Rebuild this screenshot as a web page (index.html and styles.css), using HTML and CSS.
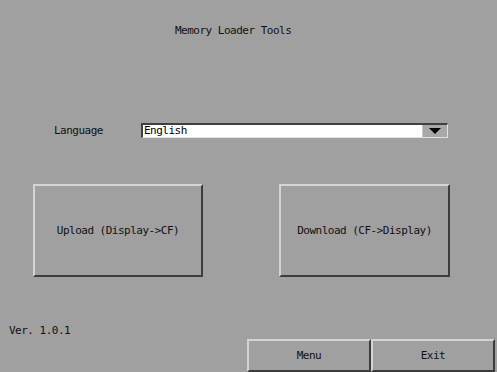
FILE: index.html
```html
<!DOCTYPE html>
<html lang="en">
<head>
    <meta charset="UTF-8">
    <meta name="viewport" content="width=device-width, initial-scale=1.0">
    <title>Memory Loader Tools</title>
    <link rel="stylesheet" href="styles.css">
</head>
<body>
    <div class="screen">
        <div class="title">Memory Loader Tools</div>

        <div class="lang-row">
            <span class="lang-label">Language</span>
            <div class="combo">
                <div class="combo-value">English</div>
                <div class="combo-btn">
                    <svg width="12" height="6" viewBox="0 0 12 6"><polygon points="0,0 12,0 6,6" fill="#000"/></svg>
                </div>
            </div>
        </div>

        <div class="actions">
            <button class="btn big upload">Upload (Display-&gt;CF)</button>
            <button class="btn big">Download (CF-&gt;Display)</button>
        </div>

        <div class="footer">
            <div class="version">Ver. 1.0.1</div>
            <div class="bar">
                <button class="btn small">Menu</button>
                <button class="btn small">Exit</button>
            </div>
        </div>
    </div>
</body>
</html>
```

FILE: styles.css
```css
body {
    margin: 0;
    padding: 0;
    background-color: #a0a0a0;
    font-family: "DejaVu Sans Mono", "Liberation Mono", monospace;
    font-size: 11px;
    letter-spacing: -0.5px;
    color: #111;
}

.screen {
    width: 497px;
    height: 372px;
    display: flex;
    flex-direction: column;
}

.title {
    margin-top: 24px;
    margin-left: 175px;
    height: 14px;
    line-height: 14px;
}

.lang-row {
    margin-top: 85px;
    height: 15px;
    display: flex;
    align-items: center;
}

.lang-label {
    width: 87px;
    padding-left: 54px;
    line-height: 15px;
}

.combo {
    width: 307px;
    height: 15px;
    box-sizing: border-box;
    display: flex;
    background: white;
    border-top: 2px solid #404040;
    border-left: 2px solid #404040;
    border-right: 1px solid #e0e0e0;
    border-bottom: 1px solid #e0e0e0;
}

.combo-value {
    flex: 1;
    line-height: 12px;
    padding-left: 1px;
    color: #000;
}

.combo-btn {
    width: 24px;
    background: #a8a8a8;
    display: flex;
    align-items: center;
    justify-content: center;
    border-left: 1px solid #c8c8c8;
}

.actions {
    margin-top: 46px;
    margin-left: 33px;
    display: flex;
    gap: 76px;
}

.btn {
    font-family: inherit;
    font-size: inherit;
    letter-spacing: inherit;
    color: #111;
    background: #a0a0a0;
    padding: 0;
    box-sizing: border-box;
    border-top: 2px solid #d4d4d4;
    border-left: 2px solid #d4d4d4;
    border-right: 2px solid #3c3c3c;
    border-bottom: 2px solid #3c3c3c;
}

.big {
    width: 171px;
    height: 93px;
}

.upload {
    width: 170px;
}

.footer {
    margin-top: auto;
}

.version {
    height: 14px;
    line-height: 14px;
    padding-left: 9px;
    margin-bottom: 1px;
    margin-top: 1px;
}

.bar {
    display: flex;
    justify-content: flex-end;
    padding-right: 2px;
}

.small {
    width: 124px;
    height: 33px;
}
```
